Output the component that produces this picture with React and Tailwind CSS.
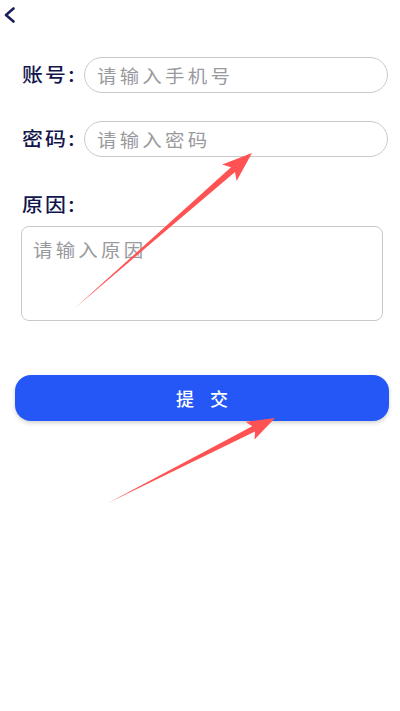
import React from "react";

const font = { fontFamily: '"Noto Sans CJK SC", "Noto Sans", sans-serif' };

function Row({ label, placeholder, className = "" }) {
  return (
    <div className={"flex items-center pl-[22px] pr-[12px] " + className}>
      <div className="w-[62px] shrink-0 whitespace-nowrap">
        <span className="inline-block origin-left scale-x-[1.1] text-[19px] font-medium leading-none tracking-[2px] text-[#12164d]">{label}</span>
      </div>
      <div className="flex h-[36px] flex-1 items-center rounded-full border border-[#c9c9cc] pl-[12px]">
        <span className="inline-block origin-left scale-x-[1.08] whitespace-nowrap text-[18px] tracking-[3px] text-[#9a9a9e]">{placeholder}</span>
      </div>
    </div>
  );
}

export default function App() {
  return (
    <div className="relative h-[711px] w-[400px] overflow-hidden bg-white" style={font}>
      <div className="h-[30px] pl-[3px] pt-[7px]">
        <svg width="14" height="16" viewBox="0 0 14 16" fill="none">
          <path d="M10.5 1.5 L3 8 L10.5 14.5" stroke="#1b1f5c" strokeWidth="2.6" strokeLinecap="round" strokeLinejoin="round" />
        </svg>
      </div>
      <Row label="账号:" placeholder="请输入手机号" className="mt-[27px]" />
      <Row label="密码:" placeholder="请输入密码" className="mt-[28px]" />
      <div className="mt-[35px] pl-[22px]">
        <span className="inline-block origin-left scale-x-[1.1] text-[19px] font-medium leading-[24px] tracking-[2px] text-[#12164d]">原因:</span>
      </div>
      <div className="ml-[21px] mr-[17px] mt-[9px] h-[95px] rounded-[8px] border border-[#c9c9cc] pl-[11px] pt-[10px]">
        <span className="inline-block origin-left scale-x-[1.08] text-[18px] leading-[24px] tracking-[3px] text-[#9a9a9e]">请输入原因</span>
      </div>
      <div className="ml-[15px] mr-[11px] mt-[54px] flex h-[46px] items-center justify-center rounded-[16px] bg-[#2457f5] text-[18px] font-medium tracking-[0.9em] text-white shadow-[0_2px_4px_rgba(0,0,0,0.18)]">
        <span className="pl-[0.9em]">提交</span>
      </div>
      <svg className="pointer-events-none absolute left-0 top-0" width="400" height="711" viewBox="0 0 400 711">
        <polygon points="75,308 235,171.9 236.6,181.1 252,153 222.2,164.5 231,167.3" fill="#ff5252" />
        <polygon points="108,503 255,431.6 254.6,439.6 275,418 245.6,421.8 252.2,426.2" fill="#ff5252" />
      </svg>
    </div>
  );
}
